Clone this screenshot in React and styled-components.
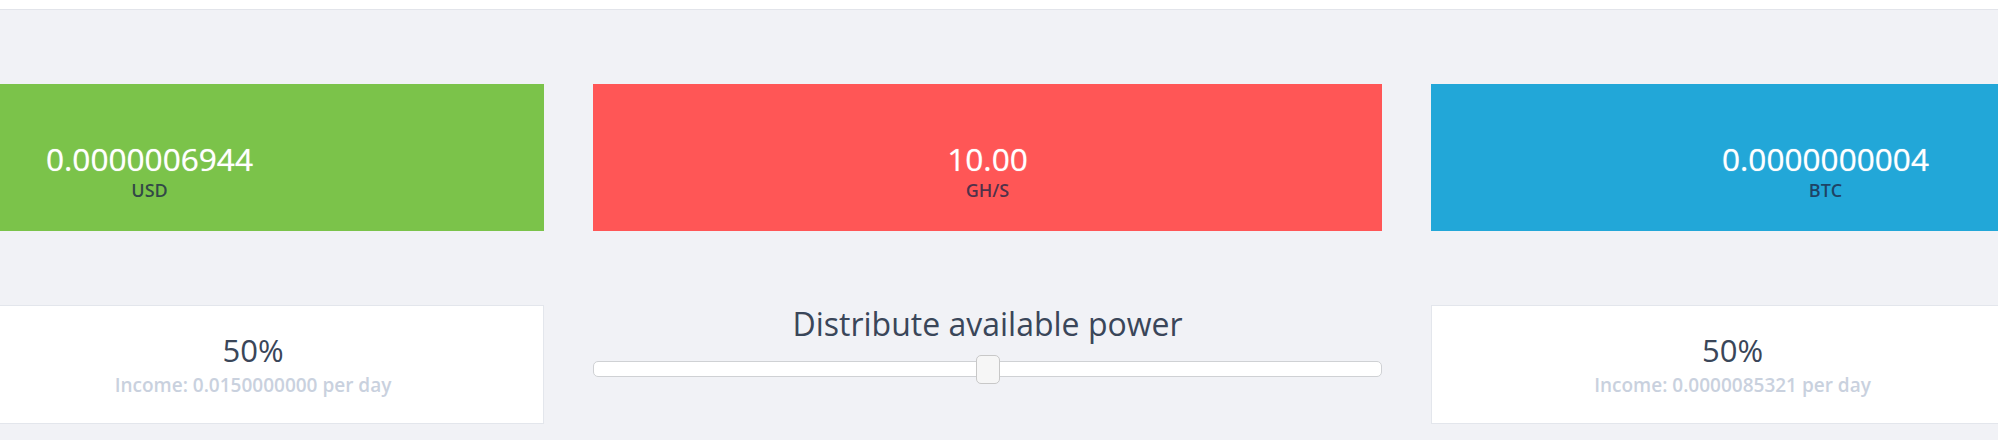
import React from 'react'
import styled, { createGlobalStyle } from 'styled-components'

const GlobalStyle = createGlobalStyle`
    html, body {
        margin: 0;
        padding: 0;
        background: #f1f2f6;
        overflow: hidden;
    }
    body {
        font-family: "Open Sans", "Noto Sans", sans-serif;
        color: #3c4858;
    }
`

const TopBar = styled.div`
    height: 9px;
    background: #ffffff;
    border-bottom: 1px solid #e2e4ea;
`

const Page = styled.div`
    padding-top: 74px;
`

const Row = styled.div`
    display: flex;
    gap: 49px;
    margin-left: -245px;
    margin-top: ${props => props.offset || 0}px;
`

const Column = styled.div`
    flex: none;
    width: 789px;
    display: flex;
    flex-direction: column;
`

const Card = styled.div`
    height: 147px;
    box-sizing: border-box;
    padding-top: 54px;
    background: ${props => props.color};
    display: flex;
    flex-direction: column;
    align-items: center;
`

const Value = styled.div`
    font-size: 31.6px;
    line-height: 42px;
    color: #ffffff;
    text-shadow: 0 0 1px rgba(255, 255, 255, 0.7);
`

const Unit = styled.div`
    margin-top: -1px;
    font-size: 18px;
    line-height: 22px;
    font-weight: 600;
    color: rgba(30, 40, 70, 0.8);
`

const Share = styled.div`
    height: 119px;
    box-sizing: border-box;
    background: #ffffff;
    border: 1px solid #e3e6ec;
    display: flex;
    justify-content: ${props => (props.side === 'left' ? 'flex-end' : 'flex-start')};
`

const ShareText = styled.div`
    width: ${props => props.width}px;
    padding-top: 26px;
    display: flex;
    flex-direction: column;
    align-items: center;
`

const Percent = styled.div`
    font-size: 31px;
    line-height: 37px;
    color: #3a4659;
`

const Income = styled.div`
    margin-top: 5px;
    font-size: 19px;
    line-height: 23px;
    font-weight: 600;
    color: #c9d1de;
`

const Heading = styled.div`
    padding-top: 1px;
    font-size: 32px;
    line-height: 36px;
    color: #3a4659;
    text-align: center;
`

const Track = styled.div`
    position: relative;
    margin-top: 19px;
    height: 16px;
    box-sizing: border-box;
    background: #ffffff;
    border: 1px solid #cfd1d4;
    border-radius: 5px;
`

const Thumb = styled.div`
    position: absolute;
    top: -7px;
    width: 24px;
    height: 29px;
    box-sizing: border-box;
    margin-left: -12px;
    background: #f6f6f6;
    border: 1px solid #c8c8c8;
    border-radius: 5px;
`

const stats = [
    { value: '0.0000006944', unit: 'USD', color: '#7bc34a' },
    { value: '10.00', unit: 'GH/S', color: '#ff5656' },
    { value: '0.0000000004', unit: 'BTC', color: '#22a7d8' },
]

const App = () => {
    const split = 50

    return (
        <>
            <GlobalStyle />
            <TopBar />
            <Page>
                <Row>
                    {stats.map(s => (
                        <Column key={s.unit}>
                            <Card color={s.color}>
                                <Value>{s.value}</Value>
                                <Unit>{s.unit}</Unit>
                            </Card>
                        </Column>
                    ))}
                </Row>
                <Row offset={74}>
                    <Column>
                        <Share side='left'>
                            <ShareText width={580}>
                                <Percent>{split}%</Percent>
                                <Income>Income: 0.0150000000 per day</Income>
                            </ShareText>
                        </Share>
                    </Column>
                    <Column>
                        <Heading>Distribute available power</Heading>
                        <Track>
                            <Thumb style={{ left: `${split}%` }} />
                        </Track>
                    </Column>
                    <Column>
                        <Share side='right'>
                            <ShareText width={601}>
                                <Percent>{100 - split}%</Percent>
                                <Income>Income: 0.0000085321 per day</Income>
                            </ShareText>
                        </Share>
                    </Column>
                </Row>
            </Page>
        </>
    )
}

export default App
